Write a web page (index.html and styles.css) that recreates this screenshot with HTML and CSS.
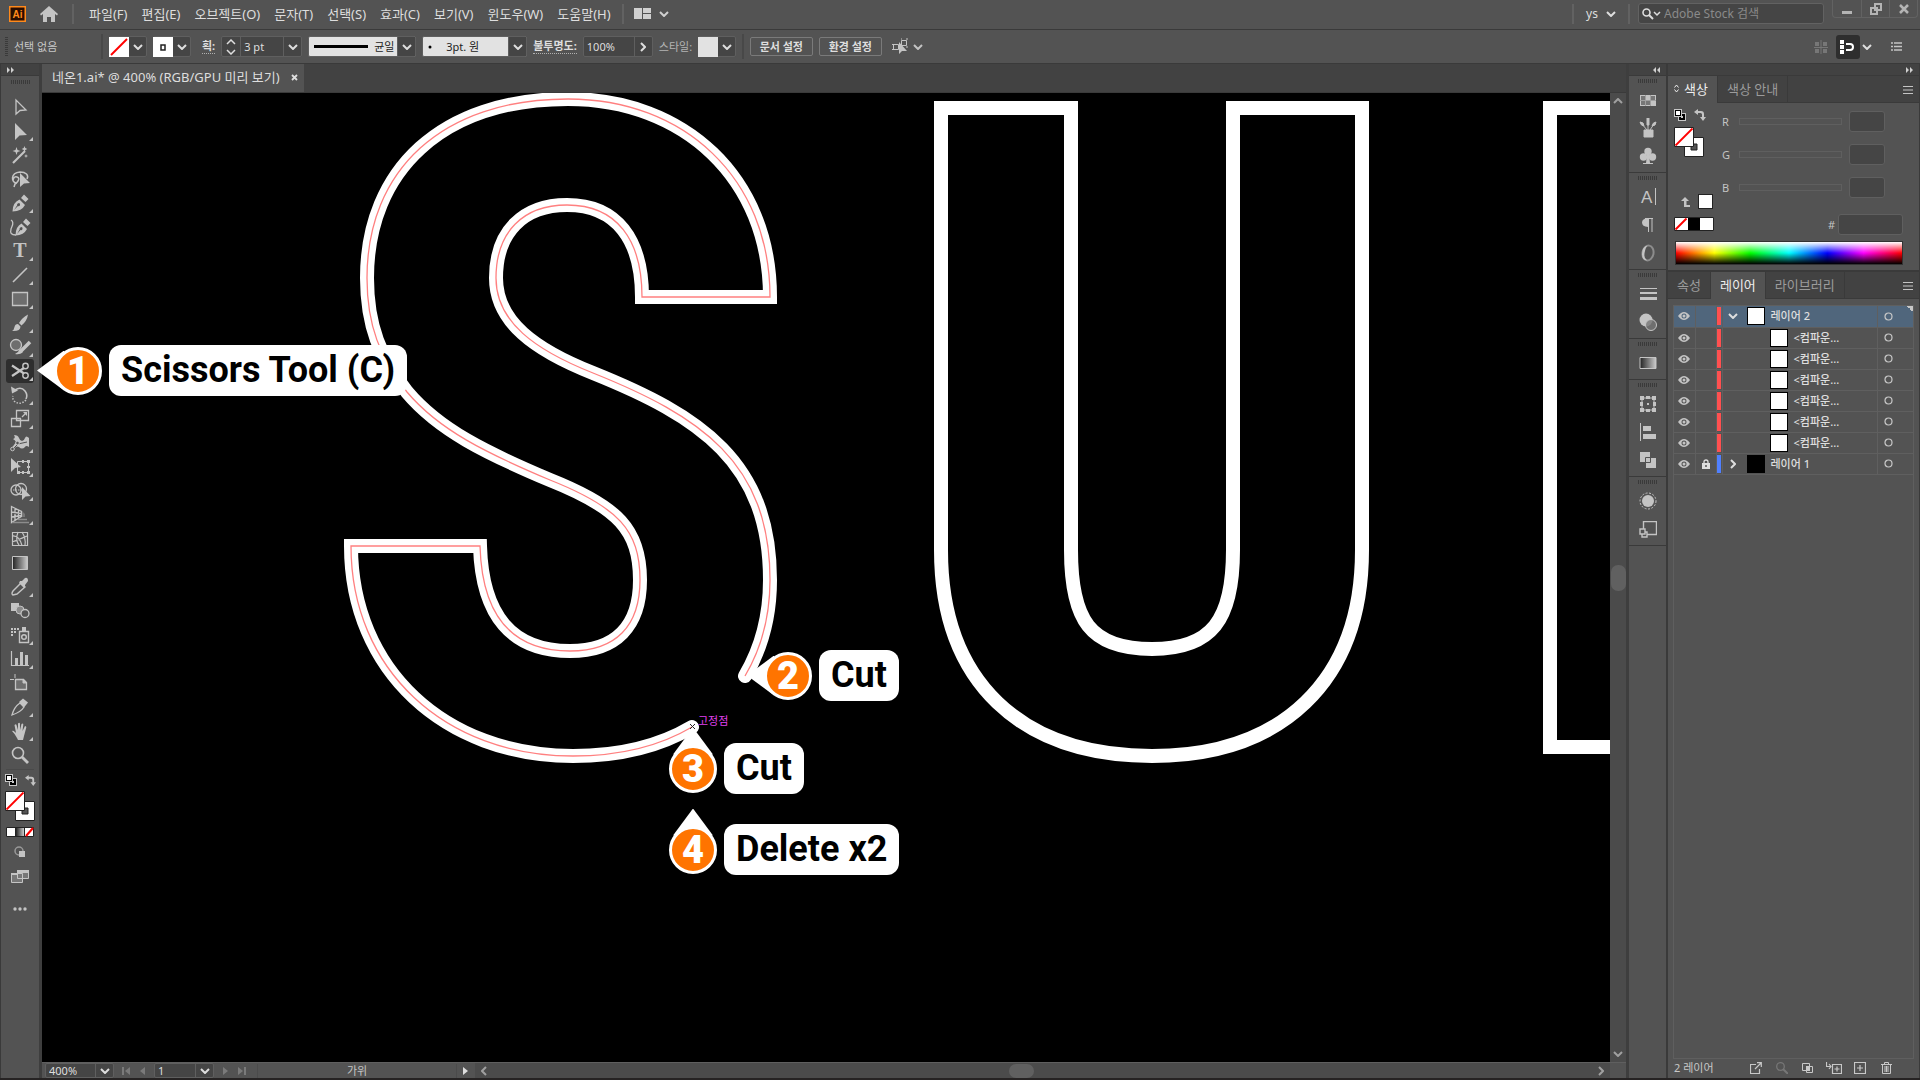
FILE: index.html
```html
<!DOCTYPE html>
<html lang="ko">
<head>
  <meta charset="UTF-8">
  <meta name="viewport" content="width=device-width, initial-scale=1.0">
  <title>네온1.ai</title>
  <link rel="stylesheet" href="styles.css">
</head>
<body>
  <!-- shared icons -->
  <svg class="sprite" aria-hidden="true">
    <symbol id="caret" viewBox="0 0 10 6"><path d="M1 1l4 4 4-4" fill="none" stroke="currentColor" stroke-width="2"/></symbol>
    <symbol id="right" viewBox="0 0 6 10"><path d="M1 1l4 4-4 4" fill="none" stroke="currentColor" stroke-width="2"/></symbol>
    <symbol id="more" viewBox="0 0 28 24"><path d="M27 18v4h-4z"/></symbol>
    <symbol id="menu" viewBox="0 0 10 8"><path d="M0 .5h10M0 4h10M0 7.500h10" stroke="currentColor"/></symbol>
    <symbol id="eye" viewBox="0 0 12 8"><path fill-rule="evenodd" d="M0 4q6-8 12 0q-6 8-12 0zM3.500 4a2.500 2.500 0 0 0 5 0a2.500 2.500 0 0 0-5 0zM4.500 4a1.500 1.500 0 0 1 3 0a1.500 1.500 0 0 1-3 0z" fill="#c4c4c4"/></symbol>
    <symbol id="ring" viewBox="0 0 9 9"><circle cx="4.500" cy="4.500" r="3.500" fill="none" stroke="#c8c8c8" stroke-width="1.200"/></symbol>
    <symbol id="default" viewBox="0 0 12 12"><path d="M4 4h8v8H4z" fill="#c8c8c8"/><path d="M5 5h6v6H5z" fill="#000"/><path d="M7 7h2v2H7z" fill="#c8c8c8"/><path d="M0 0h8v8H0z" fill="#c8c8c8"/><path d="M1 1h6v6H1z" fill="#000"/><path d="M2 2h4v4H2z" fill="#fff"/></symbol>
    <symbol id="swap" viewBox="0 0 12 12"><path d="M4 0v2h3q3 0 3 3v3h2l-3 4-3-4h2V5.500Q8 4 6.500 4H4v2L0 3z"/></symbol>
    <symbol id="fillstroke" viewBox="0 0 30 30"><path d="M10.500 10.500h19v19h-19zM17 17v6h6v-6z" fill="#fff" stroke="#222" fill-rule="evenodd"/><path d="M.5.5h19v19H.5z" fill="#fff" stroke="#222"/><path d="M1.500 18.500l17-17" stroke="#f00" stroke-width="1.800"/></symbol>
  </svg>

  <header class="menubar">
    <svg class="logo" width="17" height="16" viewBox="0 0 17 16"><rect x=".75" y=".75" width="15.500" height="14.500" fill="#2a0d00" stroke="#ff8a1c" stroke-width="1.500"/><text x="8.500" y="11.500" text-anchor="middle">Ai</text></svg>
    <svg class="home" width="18" height="16" viewBox="0 0 18 16"><path d="M9 0l9 8-1 1.500-2-1.500v8h-4v-5H7v5H3V8L1 9.500 0 8z"/></svg>
    <span class="bar"></span>
    <nav class="menus">
      <a href="#">파일(F)</a>
      <a href="#">편집(E)</a>
      <a href="#">오브젝트(O)</a>
      <a href="#">문자(T)</a>
      <a href="#">선택(S)</a>
      <a href="#">효과(C)</a>
      <a href="#">보기(V)</a>
      <a href="#">윈도우(W)</a>
      <a href="#">도움말(H)</a>
    </nav>
    <span class="bar"></span>
    <button class="workspace" aria-label="작업 영역">
      <svg width="17" height="11" viewBox="0 0 17 11"><path d="M0 0h8v11H0zM9 0h8v5H9zM9 6h8v5H9z"/></svg>
      <svg class="caret"><use href="#caret"/></svg>
    </button>
    <div class="account">
      <span class="bar"></span>
      <button class="user">ys <svg class="caret"><use href="#caret"/></svg></button>
      <span class="bar"></span>
      <label class="search">
        <svg width="19" height="12" viewBox="0 0 19 12"><circle cx="4.500" cy="4.500" r="3.500" fill="none" stroke="currentColor" stroke-width="1.600"/><path d="M7 7l4 4" stroke="currentColor" stroke-width="2"/><path d="M12 4l3 3 3-3" fill="none" stroke="currentColor" stroke-width="1.500"/></svg>
        <input type="text" placeholder="Adobe Stock 검색" aria-label="Adobe Stock 검색">
      </label>
      <div class="window-buttons">
        <button aria-label="최소화"><svg width="12" height="12" viewBox="0 0 12 12"><path d="M1 8h10v3H1z"/></svg></button>
        <button aria-label="복원"><svg width="12" height="12" viewBox="0 0 12 12"><path d="M5 1h6v6H5zM1 5h6v6H1z" fill="none" stroke="currentColor" stroke-width="2"/></svg></button>
        <button aria-label="닫기"><svg width="12" height="12" viewBox="0 0 12 12"><path d="M2 2l8 8M10 2l-8 8" stroke="currentColor" stroke-width="2.500"/></svg></button>
      </div>
    </div>
  </header>

  <section class="control">
    <span class="grip-v"></span>
    <span class="state">선택 없음</span>
    <span class="bar dark"></span>
    <button class="picker" aria-label="칠">
      <svg width="20" height="20" viewBox="0 0 20 20"><path d="M0 0h20v20H0z" fill="#fff"/><path d="M2 18L18 2" stroke="#f00" stroke-width="2"/></svg>
      <span class="drop"><svg class="caret"><use href="#caret"/></svg></span>
    </button>
    <button class="picker" aria-label="획 색상">
      <svg width="20" height="20" viewBox="0 0 20 20"><path d="M0 0h20v20H0z" fill="#fff"/><path d="M8 8h4v5H8z" fill="none" stroke="#222" stroke-width="1.500"/></svg>
      <span class="drop"><svg class="caret"><use href="#caret"/></svg></span>
    </button>
    <label class="dotted stroke-label" for="weight">획:</label>
    <div class="combo weight">
      <span class="spin"><svg width="10" height="16" viewBox="0 0 10 16"><path d="M1 5l4-4 4 4M1 11l4 4 4-4" fill="none" stroke="currentColor" stroke-width="1.500"/></svg></span>
      <input id="weight" type="text" value="3 pt">
      <span class="drop"><svg class="caret"><use href="#caret"/></svg></span>
    </div>
    <div class="combo light profile">
      <svg class="preview" width="54" height="4" viewBox="0 0 54 4"><path d="M0 0h54v3H0z" fill="#000"/></svg>
      <select aria-label="변수 폭 프로파일"><option>균일</option></select>
      <span class="drop"><svg class="caret"><use href="#caret"/></svg></span>
    </div>
    <div class="combo light brush">
      <svg class="preview" width="4" height="4" viewBox="0 0 4 4"><circle cx="2" cy="2" r="1.500" fill="#000"/></svg>
      <select aria-label="브러쉬 정의"><option>3pt. 원</option></select>
      <span class="drop"><svg class="caret"><use href="#caret"/></svg></span>
    </div>
    <label class="dotted" for="opacity">불투명도:</label>
    <div class="combo opacity">
      <input id="opacity" type="text" value="100%">
      <span class="drop"><svg class="right"><use href="#right"/></svg></span>
    </div>
    <span class="muted">스타일:</span>
    <button class="picker" aria-label="스타일">
      <svg width="20" height="20" viewBox="0 0 20 20"><path d="M0 0h20v20H0z" fill="#e2e2e2"/></svg>
      <span class="drop"><svg class="caret"><use href="#caret"/></svg></span>
    </button>
    <span class="bar dark"></span>
    <button class="outline">문서 설정</button>
    <button class="outline">환경 설정</button>
    <button class="similar" aria-label="유사 오브젝트 선택">
      <svg width="17" height="17" viewBox="0 0 17 17"><path d="M1.500 6.500h5v5h-5zM9.500 2.500h5v5h-5zM0 6.500h2M0 11.500h2M9 1h1M14 1h2M14 9h2" fill="none" stroke="currentColor"/><path d="M7 4v12l3-3 5 0z"/></svg>
      <svg class="caret"><use href="#caret"/></svg>
    </button>
    <div class="control-right">
      <svg class="dim" width="14" height="14" viewBox="0 0 14 14"><path d="M1 2h4v4H1zM9 2h4v4H9zM1 9h4v4H1zM9 9h4v4H9z"/><path d="M7 0v14M0 7.500h14" stroke="currentColor"/></svg>
      <button class="snap" aria-label="스냅"><svg width="16" height="14" viewBox="0 0 16 14"><path d="M0 0h4v4H0zM0 5h4v4H0zM0 10h4v4H0z"/><path d="M6 4h4q3 0 3 3t-3 3H6" fill="none" stroke="currentColor" stroke-width="2"/></svg></button>
      <svg class="caret"><use href="#caret"/></svg>
      <svg class="list" width="11" height="9" viewBox="0 0 11 9"><path d="M0 1h2M3 1h8M0 4.500h2M3 4.500h8M0 8h2M3 8h8" stroke="currentColor" stroke-width="1.300"/></svg>
    </div>
  </section>

  <main class="app">
    <aside class="tools">
      <div class="strip"><svg width="7" height="6" viewBox="0 0 7 6"><path d="M0 0l3 3-3 3zM4 0l3 3-3 3z"/></svg></div>
      <span class="grip"></span>
      <div class="tool-list">
        <button class="tool" aria-label="선택"><svg viewBox="0 0 28 24"><path d="M10 5v14l4-3.500 6-.5z" fill="none" stroke="currentColor" stroke-width="1.300"/></svg></button>
        <button class="tool" aria-label="직접 선택"><svg viewBox="0 0 28 24"><path d="M9 4v17l4.500-4.500 7.500-.5z"/><use href="#more"/></svg></button>
        <button class="tool" aria-label="자동 선택"><svg viewBox="0 0 28 24"><path d="M7 20L19 8" stroke="currentColor" stroke-width="2.200"/><path d="M10.500 4l1 3 3 1-3 1-1 3-1-3-3-1 3-1zM18.500 3l.8 2 2 1-2 1-.8 2-.8-2-2-1 2-1zM20 11l.6 1.500 1.500.5-1.500.6L20 15l-.6-1.400-1.400-.6 1.400-.5z"/></svg></button>
        <button class="tool" aria-label="올가미"><svg viewBox="0 0 28 24"><path d="M11 16c-6 0-7-10 3-11 6 0 9 3 7 7M7 13q1-4 4-3t1 4-3 3l-1 3" fill="none" stroke="currentColor" stroke-width="1.500"/><path d="M14 6v14l4-3.500 6-.5z"/></svg></button>
        <button class="tool" aria-label="펜"><svg viewBox="0 0 28 24"><path fill-rule="evenodd" d="M6.500 20.500q0-9 7-12l5.500 5.500q-3 6-12.500 6.500zM8 19l4-4a1.500 1.500 0 1 0-.8-.8zM15 7l3-3.500 4.500 4.500-3 3z"/><use href="#more"/></svg></button>
        <button class="tool" aria-label="곡률"><svg viewBox="0 0 28 24"><path fill-rule="evenodd" d="M9.500 20.500q0-9 6-12l5.500 5.500q-3 6-11.500 6.500zM11 19l3.500-4a1.500 1.500 0 1 0-.8-.8zM17 7l3-3.500 4.500 4.500-3 3z"/><path d="M5 5c4 2 1 6 0 9-1 4 0 6 5 6" fill="none" stroke="currentColor" stroke-width="1.300"/></svg></button>
        <button class="tool" aria-label="문자"><svg viewBox="0 0 28 24"><text class="glyph-t" x="14" y="18" text-anchor="middle">T</text><use href="#more"/></svg></button>
        <button class="tool" aria-label="선분"><svg viewBox="0 0 28 24"><path d="M7 19L21 5" stroke="currentColor" stroke-width="1.600"/><use href="#more"/></svg></button>
        <button class="tool" aria-label="사각형"><svg viewBox="0 0 28 24"><path d="M6.500 5.500h15v13h-15z" fill="#6e6e6e" stroke="currentColor" stroke-width="1.300"/><use href="#more"/></svg></button>
        <button class="tool" aria-label="페인트브러쉬"><svg viewBox="0 0 28 24"><path d="M22 3.500q-6 3-9 8.500l2.500 2.500Q21 10 22 3.500zM12 13l2.500 2.500q0 5-8.500 4.500 2-1 2.500-4 .5-3 3.500-3z"/><use href="#more"/></svg></button>
        <button class="tool" aria-label="물방울 브러쉬"><svg viewBox="0 0 28 24"><circle cx="10" cy="10" r="5.500" fill="#6e6e6e" stroke="currentColor" stroke-width="1.300"/><path d="M24 7L14 17" stroke="currentColor" stroke-width="3.500"/><path d="M14 14l3 3q-3 3-8 2 3-1 5-5z"/><use href="#more"/></svg></button>
        <button class="tool active" aria-label="가위"><svg viewBox="0 0 28 24"><path d="M6 6.500l12 8M6 17l12-8" stroke="currentColor" stroke-width="2.200"/><circle cx="19.500" cy="7" r="2.700" fill="none" stroke="currentColor" stroke-width="1.400"/><circle cx="19.500" cy="16.500" r="2.700" fill="none" stroke="currentColor" stroke-width="1.400"/><use href="#more"/></svg></button>
        <button class="tool" aria-label="회전"><svg viewBox="0 0 28 24"><path d="M9 7q6-4 10 1 3 4 1 8" fill="none" stroke="currentColor" stroke-width="1.600"/><path d="M5 3.500l1 7 6-3z"/><path d="M20 17q-6 6-12 1-2-3-1-5" fill="none" stroke="currentColor" stroke-width="1.500" stroke-dasharray="1.500 1.500"/><use href="#more"/></svg></button>
        <button class="tool" aria-label="크기 조절"><svg viewBox="0 0 28 24"><path d="M10.500 3.500h12v10h-12zM5.500 11.500h9v8h-9zM16 10l4-4" fill="none" stroke="currentColor" stroke-width="1.300"/><path d="M17 5h4v4z"/><use href="#more"/></svg></button>
        <button class="tool" aria-label="폭"><svg viewBox="0 0 28 24"><path d="M8 4q4 0 5 3t3 3 3-3 4 0v9q-3-2-4 0-3 3-6 0-2-1-3 0-3 3-5 2 3-4 5-7-1-2-3-3 3-1 1-4z"/><path d="M8 17l4-4 9-2" fill="none" stroke="#535353"/><circle cx="11.500" cy="12" r="1.800" fill="#535353" stroke="currentColor"/><circle cx="6.500" cy="18" r="1.800" fill="#535353" stroke="currentColor"/><use href="#more"/></svg></button>
        <button class="tool" aria-label="자유 변형"><svg viewBox="0 0 28 24"><path d="M11.500 6.500h11v11h-11z" fill="none" stroke="currentColor"/><path d="M16 5h2v3h-2zM21 5h3v3h-3zM21 11h3v2h-3zM11 16h3v3h-3zM16 16h2v3h-2zM21 16h3v3h-3zM5 3v14l4-4 6-1z"/><use href="#more"/></svg></button>
        <button class="tool" aria-label="도형 구성"><svg viewBox="0 0 28 24"><circle cx="10" cy="11" r="5" fill="none" stroke="currentColor" stroke-width="1.300"/><circle cx="15" cy="10" r="5.500" fill="none" stroke="currentColor" stroke-width="1.300"/><path d="M7 11h10" stroke="currentColor" stroke-dasharray="1.500 1"/><path d="M16 8v13l3.500-3.500 5-.5z"/><use href="#more"/></svg></button>
        <button class="tool" aria-label="원근감 격자"><svg viewBox="0 0 28 24"><path d="M5.500 3.500l10 5v5l-10 6zM5.500 9l10 1.500M5.500 14l10-1.500M9 5v12M12.500 7v8" fill="none" stroke="currentColor" stroke-width="1.300"/><path d="M6 19.500h17M12 16.500h9" stroke="#8c8c8c" stroke-width="1.500"/><path d="M16 8l3 3v3h-3z" fill="#777"/><use href="#more"/></svg></button>
        <button class="tool" aria-label="메쉬"><svg viewBox="0 0 28 24"><path d="M6.500 5.500h15v13h-15zM6 9q7-1 10 9.500M6 15q6-2 15-6M12 5q-3 8 1 13M16 5q4 6 3 13" fill="none" stroke="currentColor" stroke-width="1.200"/></svg></button>
        <button class="tool" aria-label="그레이디언트"><svg viewBox="0 0 28 24"><defs><linearGradient id="gray"><stop offset="0" stop-color="#222"/><stop offset="1" stop-color="#ccc"/></linearGradient></defs><path d="M6.500 5.500h15v13h-15z" fill="url(#gray)" stroke="currentColor"/></svg></button>
        <button class="tool" aria-label="스포이드"><svg viewBox="0 0 28 24"><path d="M7 20q-2-1 0-4l8-8 4 4-8 7-4 1z" fill="none" stroke="currentColor" stroke-width="1.400"/><path d="M14 6l2 0 3-3q3-1 3 3l-3 4v2l-1 1-5-5z"/><use href="#more"/></svg></button>
        <button class="tool" aria-label="블렌드"><svg viewBox="0 0 28 24"><path d="M5 4h8v8H5z"/><circle cx="14" cy="11" r="4" fill="#8a8a8a" stroke="currentColor"/><circle cx="19" cy="14.500" r="4" fill="#535353" stroke="currentColor" stroke-width="1.300"/></svg></button>
        <button class="tool" aria-label="심볼 분무기"><svg viewBox="0 0 28 24"><path d="M13.500 8.500h9v11h-9z" fill="none" stroke="currentColor" stroke-width="1.400"/><path d="M16 4h4v4h-4z"/><circle cx="18" cy="14" r="2.300" fill="none" stroke="currentColor" stroke-width="1.500"/><path d="M5 6h9M5 9h6M5 12h3" stroke="currentColor" stroke-width="2" stroke-dasharray="2 1"/><use href="#more"/></svg></button>
        <button class="tool" aria-label="막대 그래프"><svg viewBox="0 0 28 24"><path d="M5.500 4v14.500H23" fill="none" stroke="currentColor" stroke-width="1.200"/><path d="M9 11h3v7H9zM14 5h3v13h-3zM19 8h3v10h-3z"/><use href="#more"/></svg></button>
        <button class="tool" aria-label="대지"><svg viewBox="0 0 28 24"><path d="M9.500 8.500h8l3 3v7h-11z" fill="#6e6e6e" stroke="currentColor" stroke-width="1.300"/><path d="M17 8v4h4zM9 3v4M4 8.500h4" stroke="currentColor"/></svg></button>
        <button class="tool" aria-label="분할 영역"><svg viewBox="0 0 28 24"><path d="M6 20q2-8 8-12l4 4q-3 5-12 8z" fill="none" stroke="currentColor" stroke-width="1.300"/><path d="M13 7l4-3.500 5 4-4 5z"/><use href="#more"/></svg></button>
        <button class="tool" aria-label="손"><svg viewBox="0 0 28 24"><path d="M11 19q-2-4-5-7 1-1 3 1l1 1L8.500 6q1.500-1.500 2 0l1.500 5V4.500q1.300-1.500 2 0V11l1.500-6q1.500-1 1.800.5L16.500 12l2.500-5q1.500 0 1.300 1.500L18 17l-1 4h-5z"/><use href="#more"/></svg></button>
        <button class="tool" aria-label="돋보기"><svg viewBox="0 0 28 24"><circle cx="12" cy="10" r="5.500" fill="none" stroke="currentColor" stroke-width="1.600"/><path d="M16 14l6 6" stroke="currentColor" stroke-width="2.800"/></svg></button>
      </div>
      <div class="mini-row">
        <button aria-label="기본값"><svg width="12" height="12"><use href="#default"/></svg></button>
        <button aria-label="교체"><svg width="11" height="11"><use href="#swap"/></svg></button>
      </div>
      <svg class="fillstroke" width="30" height="30"><use href="#fillstroke"/></svg>
      <svg width="28" height="10" viewBox="0 0 28 10"><path d="M.5.5h27v9H.5z" fill="#fff" stroke="#222"/><path d="M10 1h8v8h-8z" fill="url(#gray)"/><path d="M9.500 1v8M18.500 1v8" stroke="#222"/><path d="M20 9l7-8" stroke="#f00" stroke-width="2"/></svg>
      <svg class="draw-mode" width="12" height="12" viewBox="0 0 12 12"><circle cx="5" cy="5" r="4" fill="none" stroke="#999" stroke-width="1.500"/><path d="M5 5h6v6H5z"/></svg>
      <svg class="screen-mode" width="18" height="13" viewBox="0 0 18 13"><path d="M.5 3.500h11v9H.5zM6.500.5h11v8h-11z" fill="#777" stroke="currentColor"/><path d="M6 0h12v3H6zM0 3h6v2H0z"/></svg>
      <svg class="dots" width="14" height="4" viewBox="0 0 14 4"><circle cx="2" cy="2" r="1.700"/><circle cx="7" cy="2" r="1.700"/><circle cx="12" cy="2" r="1.700"/></svg>
    </aside>

    <section class="document">
      <div class="doc-tabs">
        <div class="doc-tab">네온1.ai* @ 400% (RGB/GPU 미리 보기)<button aria-label="닫기"><svg width="7" height="7" viewBox="0 0 7 7"><path d="M1 1l5 5M6 1L1 6" stroke="currentColor" stroke-width="1.800"/></svg></button></div>
      </div>
      <div class="view">
        <div class="canvas">
          <svg class="artwork">
            <defs><path id="s" d="M692 727C660 746 620 756 573 756C445 756 351 670 351 546H480C482 616 512 651 570 651C616 651 640 626 640 580C640 530 618 507 550 480C486 453 439 430 407 392C380 358 367 325 367 278C367 170 442 99 568 99C684 99 770 178 770 297H642C642 240 617 205 567 205C523 205 496 232 496 278C496 322 535 350 593 373C700 416 770 462 770 580C770 618 761 649 745 676"/></defs>
            <g transform="translate(-42 -93)" fill="none" stroke="#fff" stroke-width="14">
              <use href="#s" stroke-linecap="round"/>
              <use href="#s" stroke="#ff8080" stroke-width="1.300"/>
              <path d="M941 108H1071V550C1071 620 1090 649 1152 649C1212 649 1233 620 1233 550V108H1362V550C1362 682 1281 756 1152 756C1021 756 941 682 941 550Z"/>
              <path d="M4000 108H1550V747H4000"/>
              <path d="M690 724l5 5M695 724l-5 5" stroke="#222" stroke-width="1"/>
            </g>
          </svg>
          <span class="hint">고정점</span>
          <div class="note note-1"><span class="pin left">1</span><span class="note-text">Scissors Tool (C)</span></div>
          <div class="note note-2"><span class="pin left">2</span><span class="note-text">Cut</span></div>
          <div class="note note-3"><span class="pin up">3</span><span class="note-text">Cut</span></div>
          <div class="note note-4"><span class="pin up">4</span><span class="note-text">Delete x2</span></div>
        </div>
        <div class="scroll-v">
          <svg class="caret thin"><use href="#caret"/></svg>
          <span class="thumb"></span>
          <svg class="caret thin"><use href="#caret"/></svg>
        </div>
      </div>
      <footer class="status">
        <div class="combo zoom"><select aria-label="확대/축소"><option>400%</option></select><span class="drop"><svg class="caret"><use href="#caret"/></svg></span></div>
        <svg class="step" width="24" height="8" viewBox="0 0 24 8"><path d="M0 0h2v8H0zM8 0v8L3 4zM23 0v8l-5-4z"/></svg>
        <div class="combo page"><select aria-label="대지"><option>1</option></select><span class="drop"><svg class="caret"><use href="#caret"/></svg></span></div>
        <svg class="step" width="24" height="8" viewBox="0 0 24 8"><path d="M1 0v8l5-4zM16 0v8l5-4zM22 0h2v8h-2z"/></svg>
        <span class="current">가위</span>
        <svg class="play" width="5" height="8" viewBox="0 0 5 8"><path d="M0 0l5 4-5 4z"/></svg>
        <div class="scroll-h">
          <svg class="right back thin"><use href="#right"/></svg>
          <span class="thumb"></span>
          <svg class="right thin"><use href="#right"/></svg>
        </div>
      </footer>
    </section>

    <aside class="dock">
      <div class="strip end"><svg width="7" height="6" viewBox="0 0 7 6"><path d="M3 0L0 3l3 3zM7 0L4 3l3 3z"/></svg></div>
      <div class="dock-group">
        <button aria-label="견본"><svg width="18" height="18" viewBox="0 0 18 18"><path d="M1 4h16v11H1z"/><path d="M2 5h4v4H2zM12 5h4v4h-4zM2 10h4v4H2zM7 10h4v4H7z" fill="#777"/><path d="M6.500 4v11M11.500 4v11M1 9.500h16" stroke="#a0a0a0"/></svg></button>
        <button aria-label="브러쉬"><svg width="18" height="20" viewBox="0 0 18 20"><path d="M5 12h9v7H5zM8 12L3 6M9 12V2M11 12l4-6" stroke="currentColor"/><path d="M1 4q4 0 4 4-3 0-4-4zM8 0h2v7H8zM13 8q1-4 4-4 0 4-4 4z" stroke="currentColor"/></svg></button>
        <button aria-label="심볼"><svg width="18" height="18" viewBox="0 0 18 18"><circle cx="9" cy="4.500" r="3.700"/><circle cx="4.500" cy="10" r="3.700"/><circle cx="13.500" cy="10" r="3.700"/><path d="M8 7h2l1 9h3v1H4v-1h3z"/></svg></button>
      </div>
      <div class="dock-group">
        <button aria-label="문자 패널"><svg width="18" height="24" viewBox="0 0 18 24"><text class="glyph-a" x="2" y="18">A</text><path d="M16.500 3v17" stroke="currentColor"/></svg></button>
        <button aria-label="단락"><svg width="18" height="18" viewBox="0 0 18 18"><path d="M13 2v14M9.500 2v14M6 2.500h8" stroke="currentColor" fill="none"/><path d="M9 2v9q-6-.5-6-4.500T9 2z"/></svg></button>
        <button aria-label="OpenType"><svg width="18" height="18" viewBox="0 0 18 18"><ellipse cx="9" cy="9" rx="5.500" ry="7.500" transform="rotate(10 9 9)" fill="none" stroke="#8c8c8c" stroke-width="2"/><path d="M9 1.500Q3 2 3 10q0 6 5 6.500Q4 14 6 7q1-5 3-5.500z"/></svg></button>
      </div>
      <div class="dock-group">
        <button aria-label="획 패널"><svg width="18" height="14" viewBox="0 0 18 14"><path d="M1 1h17v1H1zM1 5h17v2H1zM1 10h17v3H1z"/></svg></button>
        <button aria-label="투명도"><svg width="18" height="18" viewBox="0 0 18 18"><circle cx="7" cy="7" r="6.500"/><circle cx="12" cy="12" r="5.500" fill="#777" fill-opacity=".8" stroke="currentColor"/></svg></button>
      </div>
      <div class="dock-group">
        <button aria-label="그레이디언트 패널"><svg width="18" height="12" viewBox="0 0 18 12"><path d="M1 .5h16v11H1z" fill="url(#gray)" stroke="currentColor"/></svg></button>
      </div>
      <div class="dock-group">
        <button aria-label="변형"><svg width="16" height="16" viewBox="0 0 16 16"><path d="M2 2h12v12H2z" fill="none" stroke="currentColor"/><path d="M0 0h4v4H0zM6 0h4v3H6zM12 0h4v4h-4zM0 6h3v4H0zM13 6h3v4h-3zM0 12h4v4H0zM6 13h4v3H6zM12 12h4v4h-4zM7 7h2v2H7z"/></svg></button>
        <button aria-label="정렬"><svg width="16" height="18" viewBox="0 0 16 18"><path d="M0 0h1v18H0zM3 3h8v5H3zM3 11h13v5H3z"/></svg></button>
        <button aria-label="패스파인더"><svg width="16" height="16" viewBox="0 0 16 16"><path d="M0 0h10v10H0zM6 6h10v10H6z"/><path d="M5.500 10V5.500H10M6 10.500h4.500V6" fill="none" stroke="#535353"/></svg></button>
      </div>
      <div class="dock-group">
        <button aria-label="모양"><svg width="18" height="18" viewBox="0 0 18 18"><circle cx="9" cy="9" r="6"/><circle cx="9" cy="9" r="8" fill="none" stroke="currentColor" stroke-dasharray="2 1.500"/></svg></button>
        <button aria-label="그래픽 스타일"><svg width="18" height="17" viewBox="0 0 18 17"><path d="M4.500 8V.5h13v13H8M1 8h5v5H1zM3 13v3h5v-5H6" fill="none" stroke="currentColor" stroke-width="1.400"/></svg></button>
      </div>
    </aside>

    <aside class="panels">
      <div class="strip end"><svg width="7" height="6" viewBox="0 0 7 6"><path d="M0 0l3 3-3 3zM4 0l3 3-3 3z"/></svg></div>
      <div class="tabs">
        <button class="tab on"><svg width="5" height="9" viewBox="0 0 5 9"><path d="M.5 3.500l2-2.500 2 2.500M.5 5.500l2 2.500 2-2.500" fill="none" stroke="currentColor"/></svg>색상</button>
        <button class="tab">색상 안내</button>
        <svg class="menu"><use href="#menu"/></svg>
      </div>
      <div class="color-panel">
        <div class="swatches">
          <div class="swatch-tools">
            <svg width="12" height="12"><use href="#default"/></svg>
            <svg width="12" height="12"><use href="#swap"/></svg>
          </div>
          <svg width="30" height="30"><use href="#fillstroke"/></svg>
          <div class="last-color">
            <svg width="9" height="10" viewBox="0 0 9 10"><path d="M4 0l4 4H5.500v4H9v2H3V4H0z"/></svg>
            <span class="chip"></span>
          </div>
          <svg width="40" height="14" viewBox="0 0 40 14"><path d="M.5.5h39v13H.5z" fill="#fff" stroke="#222"/><path d="M14 1h12v12H14z" fill="#000"/><path d="M1.500 12.500l11-11" stroke="#f00" stroke-width="2"/></svg>
        </div>
        <div class="sliders">
          <div class="slider"><label for="r">R</label><input id="r" type="range"><input type="text" aria-label="R 값"></div>
          <div class="slider"><label for="g">G</label><input id="g" type="range"><input type="text" aria-label="G 값"></div>
          <div class="slider"><label for="b">B</label><input id="b" type="range"><input type="text" aria-label="B 값"></div>
          <div class="hex"><label for="hex">#</label><input id="hex" type="text"></div>
        </div>
        <div class="spectrum"></div>
      </div>
      <div class="tabs second">
        <button class="tab">속성</button>
        <button class="tab on">레이어</button>
        <button class="tab">라이브러리</button>
        <svg class="menu"><use href="#menu"/></svg>
      </div>
      <div class="layers">
        <table>
          <tr class="selected"><td class="see"><svg><use href="#eye"/></svg></td><td class="lock"></td><td class="mark"><i></i></td><td class="name"><div><span class="fold"><svg class="caret"><use href="#caret"/></svg></span><span class="thumb-box"></span>레이어 2</div></td><td class="target"><svg><use href="#ring"/></svg></td></tr>
          <tr><td class="see"><svg><use href="#eye"/></svg></td><td class="lock"></td><td class="mark"><i></i></td><td class="name child"><div><span class="thumb-box"></span>&lt;컴파운...</div></td><td class="target"><svg><use href="#ring"/></svg></td></tr>
          <tr><td class="see"><svg><use href="#eye"/></svg></td><td class="lock"></td><td class="mark"><i></i></td><td class="name child"><div><span class="thumb-box"></span>&lt;컴파운...</div></td><td class="target"><svg><use href="#ring"/></svg></td></tr>
          <tr><td class="see"><svg><use href="#eye"/></svg></td><td class="lock"></td><td class="mark"><i></i></td><td class="name child"><div><span class="thumb-box"></span>&lt;컴파운...</div></td><td class="target"><svg><use href="#ring"/></svg></td></tr>
          <tr><td class="see"><svg><use href="#eye"/></svg></td><td class="lock"></td><td class="mark"><i></i></td><td class="name child"><div><span class="thumb-box"></span>&lt;컴파운...</div></td><td class="target"><svg><use href="#ring"/></svg></td></tr>
          <tr><td class="see"><svg><use href="#eye"/></svg></td><td class="lock"></td><td class="mark"><i></i></td><td class="name child"><div><span class="thumb-box"></span>&lt;컴파운...</div></td><td class="target"><svg><use href="#ring"/></svg></td></tr>
          <tr><td class="see"><svg><use href="#eye"/></svg></td><td class="lock"></td><td class="mark"><i></i></td><td class="name child"><div><span class="thumb-box"></span>&lt;컴파운...</div></td><td class="target"><svg><use href="#ring"/></svg></td></tr>
          <tr><td class="see"><svg><use href="#eye"/></svg></td><td class="lock"><svg width="8" height="10" viewBox="0 0 8 10"><path d="M0 4h8v6H0z"/><path d="M2 5V3q0-2 2-2t2 2v2" fill="none" stroke="currentColor" stroke-width="1.300"/><path d="M4 6v2" stroke="#535353" stroke-width="1.500"/></svg></td><td class="mark blue"><i></i></td><td class="name"><div><span class="fold"><svg class="right"><use href="#right"/></svg></span><span class="thumb-box black"></span>레이어 1</div></td><td class="target"><svg><use href="#ring"/></svg></td></tr>
        </table>
      </div>
      <footer class="layer-actions">
        <span>2 레이어</span>
        <button aria-label="내보내기"><svg width="12" height="12" viewBox="0 0 12 12"><path d="M6 2.500H.5v9h9V7M5 7l6-6M7 .7h4.300V5" fill="none" stroke="currentColor" stroke-width="1.200"/></svg></button>
        <button class="dim" aria-label="찾기"><svg width="12" height="12" viewBox="0 0 12 12"><circle cx="4.500" cy="4.500" r="3.800" fill="none" stroke="currentColor" stroke-width="1.300"/><path d="M7 7l5 5" stroke="currentColor" stroke-width="2"/></svg></button>
        <button aria-label="클리핑 마스크"><svg width="12" height="12" viewBox="0 0 12 12"><path d="M.5 1.500h7v7h-7zM4.500 4.500h6v6h-6z" fill="none" stroke="currentColor"/><path d="M4 4h4v5H4z"/></svg></button>
        <button aria-label="하위 레이어"><svg width="16" height="12" viewBox="0 0 16 12"><path d="M6.500 2.500h9v9h-9zM11 4.500v5M8.500 7h5M.5 0v4.500H5M3 2l2 2.500L3 7" fill="none" stroke="currentColor" stroke-width="1.200"/></svg></button>
        <button aria-label="새 레이어"><svg width="12" height="12" viewBox="0 0 12 12"><path d="M.5.5h11v11H.5zM6 3v6M3 6h6" fill="none" stroke="currentColor" stroke-width="1.200"/></svg></button>
        <button aria-label="삭제"><svg width="11" height="12" viewBox="0 0 11 12"><path d="M0 2.500h11M3.500 2V.5h4V2M1.500 3v8.500h8V3M4 4v6M5.500 4v6M7 4v6" fill="none" stroke="currentColor"/></svg></button>
      </footer>
    </aside>
  </main>
</body>
</html>
```
FILE: styles.css
```css
* {
  box-sizing: border-box;
}
body {
  margin: 0;
  height: 100vh;
  padding-bottom: 2px;
  display: flex;
  flex-direction: column;
  overflow: hidden;
  background-color: #262323;
  color: #dedede;
  font-family: "Noto Sans", "Noto Sans CJK KR", sans-serif;
  font-size: 11px;
  line-height: 14px;
}
svg {
  display: block;
  flex: none;
  fill: currentColor;
}
button, input, select {
  margin: 0;
  padding: 0;
  border: none;
  border-radius: 0;
  background: none;
  color: inherit;
  font: inherit;
  appearance: none;
  outline: none;
}
button {
  display: flex;
  align-items: center;
  justify-content: center;
}
a {
  color: inherit;
  text-decoration: none;
}
.sprite {
  position: absolute;
  width: 0;
  height: 0;
}
.caret {
  width: 10px;
  height: 6px;
}
.right {
  width: 6px;
  height: 10px;
}
.thin {
  color: #a0a0a0;
}
.bar {
  width: 2px;
  height: 20px;
  background-color: #626262;
}
.bar.dark {
  height: 25px;
  background-color: #484848;
}

/* menu bar */
.menubar {
  height: 30px;
  flex: none;
  display: flex;
  align-items: center;
  padding: 0 0 2px 9px;
  border-bottom: 1px solid #3a3a3a;
  background-color: #535353;
}
.logo text {
  fill: #ff8a1c;
  font: bold 10px "Liberation Sans", sans-serif;
}
.home {
  margin: 0 14px;
  color: #c4c4c4;
}
.menus {
  display: flex;
  gap: 14px;
  margin: 0 11px 0 15px;
  font-size: 13px;
  line-height: 20px;
}
.workspace {
  gap: 8px;
  margin-left: 10px;
  color: #d0d0d0;
}
.account {
  display: flex;
  align-items: center;
  height: 100%;
  margin-left: auto;
}
.user {
  gap: 8px;
  width: 54px;
  font-size: 12px;
}
.search {
  display: flex;
  align-items: center;
  gap: 3px;
  width: 186px;
  height: 21px;
  margin: 0 8px;
  padding-left: 3px;
  border: 1px solid #626262;
  border-radius: 3px;
  background-color: #454545;
}
.search input {
  width: 150px;
  font-size: 12px;
}
.search input::placeholder {
  color: #8a8a8a;
}
.window-buttons {
  display: flex;
  align-self: flex-start;
  height: 18px;
  margin-right: 2px;
  border: 1px solid #626262;
  border-top: none;
  border-radius: 0 0 4px 4px;
  color: #b4b4b4;
}
.window-buttons button {
  width: 28px;
}
.window-buttons button + button {
  border-left: 1px solid #626262;
}

/* control bar */
.control {
  height: 34px;
  flex: none;
  display: flex;
  align-items: center;
  gap: 6px;
  padding-left: 5px;
  border-bottom: 1px solid #3a3a3a;
  background-color: #535353;
  white-space: nowrap;
}
.grip-v {
  width: 3px;
  height: 20px;
  background: repeating-linear-gradient(#3a3a3a 0 1px, #535353 1px 2px);
}
.state {
  width: 81px;
  color: #c8c8c8;
}
.picker, .combo {
  display: flex;
  height: 21px;
  border: 1px solid #5f5f5f;
  border-radius: 2px;
  background-color: #454545;
}
.picker {
  width: 38px;
}
.drop, .spin {
  display: flex;
  align-items: center;
  justify-content: center;
  flex: none;
  width: 18px;
  height: 100%;
}
.combo .drop {
  border-left: 1px solid #5f5f5f;
}
.combo input, .combo select {
  flex: 1;
  min-width: 0;
  padding-left: 3px;
}
.stroke-label {
  margin-left: 5px;
}
.dotted {
  border-bottom: 1px dotted #b0b0b0;
  font-weight: bold;
}
.weight {
  width: 81px;
}
.weight input {
  border-left: 1px solid #5f5f5f;
}
.light {
  align-items: center;
  padding-left: 5px;
  background-color: #e2e2e2;
}
.combo.light select {
  padding-left: 6px;
  color: #222;
}
.light .drop {
  background-color: #454545;
}
.profile {
  width: 108px;
}
.combo.brush select {
  padding-left: 14px;
}
.brush {
  width: 105px;
}
.opacity {
  width: 70px;
}
.muted {
  width: 33px;
  color: #b4b4b4;
}
.outline {
  width: 63px;
  height: 19px;
  border: 1px solid #7a7a7a;
  border-radius: 2px;
  font-weight: bold;
}
.similar {
  gap: 4px;
  margin-left: 4px;
  color: #c4c4c4;
}
.control-right {
  display: flex;
  align-items: center;
  margin: 0 18px 0 auto;
}
.dim {
  color: #777;
}
.snap {
  width: 24px;
  height: 24px;
  margin: 0 2px 0 8px;
  border-radius: 3px;
  background-color: #2e2e2e;
  color: #fff;
}
.list {
  margin-left: 19px;
  color: #c4c4c4;
}

/* work area */
.app {
  flex: 1;
  min-height: 0;
  display: flex;
}
.strip {
  display: flex;
  align-items: center;
  align-self: stretch;
  height: 12px;
  flex: none;
  padding: 0 6px;
  border-bottom: 1px solid #3a3a3a;
  background-color: #424242;
  color: #d0d0d0;
}
.strip.end {
  justify-content: flex-end;
}
.grip {
  width: 19px;
  height: 4px;
  flex: none;
  margin: 4px 0 11px;
  background: repeating-linear-gradient(90deg, #3a3a3a 0 1px, #535353 1px 2px);
}

.tools {
  display: flex;
  flex-direction: column;
  align-items: center;
  width: 42px;
  flex: none;
  border-left: 1px solid #3a3a3a;
  border-right: 3px solid #3e3e3e;
  background-color: #535353;
  color: #c4c4c4;
}
.tool-list {
  padding-bottom: 2px;
  border-bottom: 1px solid #4a4a4a;
}
.tool {
  width: 28px;
  height: 24px;
}
.tool svg {
  width: 28px;
  height: 24px;
}
.tool.active {
  border-radius: 3px;
  background-color: #2e2e2e;
}
.glyph-t {
  font: bold 20px "Liberation Serif", serif;
}
.mini-row {
  display: flex;
  justify-content: space-between;
  width: 31px;
  margin: 4px 0 5px;
}
.fillstroke {
  margin-bottom: 6px;
}
.draw-mode {
  margin: 9px 0 12px;
}
.screen-mode {
  margin-bottom: 24px;
}

.document {
  flex: 1;
  min-width: 0;
  display: flex;
  flex-direction: column;
}
.doc-tabs {
  display: flex;
  height: 29px;
  flex: none;
  border-bottom: 1px solid #3a3a3a;
  background-color: #424242;
}
.doc-tab {
  display: flex;
  align-items: center;
  justify-content: space-between;
  width: 262px;
  padding: 0 6px 2px 10px;
  background-color: #535353;
  font-size: 13px;
  white-space: nowrap;
}
.view {
  flex: 1;
  min-height: 0;
  display: flex;
}
.canvas {
  position: relative;
  flex: 1;
  background-color: #000;
}
.artwork {
  position: absolute;
  width: 100%;
  height: 100%;
}
.hint {
  position: absolute;
  left: 656px;
  top: 621px;
  color: #e040f0;
  font-size: 11px;
}

/* numbered notes on the artwork */
.note {
  position: absolute;
  isolation: isolate;
  display: flex;
  align-items: center;
  gap: 7px;
}
.note-1 {
  left: 12px;
  top: 252px;
}
.note-2 {
  left: 722px;
  top: 557px;
}
.note-3 {
  left: 627px;
  top: 650px;
}
.note-4 {
  left: 627px;
  top: 731px;
}
.note-text {
  padding: 0 12px;
  border-radius: 12px;
  background-color: #fff;
  color: #000;
  font: bold 36px/51px Roboto, sans-serif;
  white-space: nowrap;
}
.pin {
  position: relative;
  width: 48px;
  height: 48px;
  border: 3px solid #fff;
  border-radius: 50%;
  background-color: #ff7400;
  color: #fff;
  font: 900 38px/43px Roboto, sans-serif;
  text-align: center;
}
.pin::before {
  content: "";
  position: absolute;
  z-index: -1;
  background-color: #fff;
}
.pin.left::before {
  left: -20px;
  top: 1px;
  width: 27px;
  height: 40px;
  clip-path: polygon(0 50%, 100% 0, 100% 100%);
}
.pin.up::before {
  left: 1px;
  top: -20px;
  width: 40px;
  height: 27px;
  clip-path: polygon(50% 0, 100% 100%, 0 100%);
}

.scroll-v {
  display: flex;
  flex-direction: column;
  align-items: center;
  justify-content: space-between;
  width: 16px;
  padding: 5px 0;
  background-color: #4b4b4b;
}
.scroll-v .caret:first-child, .back {
  transform: rotate(180deg);
}
.thumb {
  border-radius: 7px;
  background-color: #606060;
}
.scroll-v .thumb {
  width: 15px;
  height: 26px;
}
.status {
  display: flex;
  align-items: center;
  height: 16px;
  flex: none;
  border-top: 1px solid #5f5f5f;
  background-color: #535353;
}
.status .combo {
  height: 15px;
}
.zoom {
  width: 69px;
  margin-left: 3px;
}
.page {
  width: 60px;
}
.step {
  margin: 0 8px;
  color: #7a7a7a;
}
.current {
  width: 200px;
  margin: 0 6px 0 3px;
  border: solid #4b4b4b;
  border-width: 0 1px;
  color: #c4c4c4;
  text-align: center;
}
.scroll-h {
  display: flex;
  align-items: center;
  justify-content: space-between;
  flex: 1;
  height: 100%;
  margin: 0 16px 0 7px;
  padding: 0 6px;
  background-color: #4b4b4b;
}
.scroll-h .thumb {
  width: 25px;
  height: 14px;
  margin-right: 42px;
}

/* icon dock */
.dock {
  display: flex;
  flex-direction: column;
  width: 42px;
  flex: none;
  border-left: 3px solid #3e3e3e;
  border-right: 2px solid #3a3a3a;
  background-color: #535353;
  color: #c4c4c4;
}
.dock-group {
  padding-bottom: 2px;
  border-bottom: 1px solid #3a3a3a;
}
.dock-group::before {
  content: "";
  display: block;
  width: 19px;
  height: 4px;
  margin: 3px auto;
  background: repeating-linear-gradient(90deg, #3a3a3a 0 1px, #535353 1px 2px);
}
.dock-group button {
  width: 100%;
  height: 28px;
}
.glyph-a {
  font: 17px "Liberation Sans", sans-serif;
}

/* panels */
.panels {
  display: flex;
  flex-direction: column;
  width: 252px;
  flex: none;
  border-right: 1px solid #3a3a3a;
  background-color: #535353;
}
.tabs {
  display: flex;
  align-items: center;
  height: 27px;
  flex: none;
  background-color: #424242;
  box-shadow: inset 0 -1px #3a3a3a;
}
.tab {
  gap: 5px;
  height: 27px;
  padding: 0 9px 2px;
  border-right: 1px solid #3a3a3a;
  color: #9c9c9c;
  font-size: 13px;
}
.tab.on {
  background-color: #535353;
  color: #eee;
}
.tabs:not(.second) .tab.on {
  padding-left: 6px;
}
.menu {
  width: 10px;
  height: 8px;
  margin: 0 6px 0 auto;
  color: #c4c4c4;
}
.color-panel {
  display: grid;
  grid-template-columns: 40px minmax(0, 1fr);
  column-gap: 8px;
  padding: 6px 16px 5px 6px;
  color: #c4c4c4;
}
.swatches {
  display: flex;
  flex-direction: column;
}
.swatch-tools {
  display: flex;
  gap: 8px;
  margin-bottom: 6px;
}
.last-color {
  display: flex;
  align-items: center;
  gap: 8px;
  margin: 37px 0 8px;
  padding-left: 7px;
}
.chip {
  width: 15px;
  height: 15px;
  border: 1px solid #222;
  background-color: #fff;
}
.sliders {
  display: flex;
  flex-direction: column;
  gap: 12px;
  padding-top: 2px;
}
.slider {
  display: flex;
  align-items: center;
  height: 21px;
  padding-right: 18px;
}
.slider label {
  width: 17px;
}
.slider input[type="range"] {
  flex: 1;
  min-width: 0;
  height: 7px;
  margin-right: 7px;
  border: 1px solid #5f5f5f;
}
input[type="range"]::-webkit-slider-thumb {
  appearance: none;
  width: 0;
  height: 0;
}
.slider input[type="text"], .hex input {
  width: 36px;
  height: 21px;
  border: 1px solid #5f5f5f;
  border-radius: 3px;
  background-color: #454545;
}
.hex {
  display: flex;
  align-items: center;
  justify-content: flex-end;
  gap: 3px;
  margin-top: 4px;
}
.hex input {
  width: 65px;
}
.spectrum {
  grid-column: 1 / 3;
  height: 24px;
  margin: 6px 0 0 1px;
  border: 1px solid #333;
  background: linear-gradient(#fff, transparent 50%, #000),
    linear-gradient(90deg, #f00, #ff0 17%, #0f0 33%, #0ff 50%, #00f 67%, #f0f 83%, #f00);
}
.tabs.second {
  border-top: 2px solid #3a3a3a;
  height: 29px;
}
.layers {
  flex: 1;
  margin: 6px 5px 0;
  border: 1px solid #5f5f5f;
}
.layers table {
  width: 100%;
  border-collapse: collapse;
  table-layout: fixed;
}
.layers td {
  height: 21px;
  padding: 0;
  border-bottom: 1px solid #5f5f5f;
}
.layers td + td {
  border-left: 1px solid #5f5f5f;
}
.selected {
  background-color: #50667c;
}
.see, .lock {
  width: 21px;
}
.see svg {
  width: 12px;
  height: 8px;
  margin-left: 4px;
}
.lock svg {
  margin: 0 auto;
}
.mark {
  width: 6px;
}
.mark i {
  display: block;
  width: 4px;
  height: 18px;
  margin: 0 auto;
  background-color: #ff5050;
}
.mark.blue i {
  background-color: #5080ff;
}
.name div {
  display: flex;
  align-items: center;
  font-weight: 500;
}
.child div {
  padding-left: 47px;
}
.fold {
  display: flex;
  justify-content: center;
  width: 24px;
  padding-right: 3px;
}
.thumb-box {
  width: 18px;
  height: 18px;
  flex: none;
  margin-right: 6px;
  border: 1px solid #000;
  background-color: #fff;
}
.black {
  background-color: #000;
}
.target {
  width: 36px;
}
.target svg {
  width: 9px;
  height: 9px;
  margin-left: 6px;
}
.selected .target {
  background: linear-gradient(45deg, transparent 50%, #c8c8c8 50%) no-repeat top right / 6px 6px;
}
.layer-actions {
  display: flex;
  align-items: center;
  gap: 14px;
  height: 19px;
  flex: none;
  padding: 0 27px 2px 6px;
  color: #c8c8c8;
}
.layer-actions button {
  width: 12px;
}
.layer-actions span {
  margin-right: auto;
}
.layer-actions .dim {
  color: #777;
}
```
